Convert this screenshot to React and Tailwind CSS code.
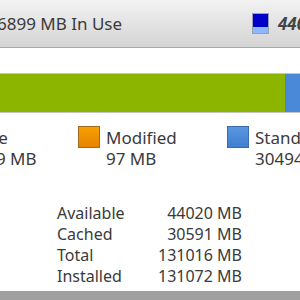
import { useState } from "react";

const legend = [
  { name: "In Use", value: "16899 MB", box: "bg-gradient-to-b from-[#9ccc10] to-[#7fae00] border-[#6e8f10]" },
  { name: "Modified", value: "97 MB", box: "bg-gradient-to-b from-[#f7a000] to-[#e68400] border-[#a06a20]" },
  { name: "Standby", value: "30494 MB", box: "bg-gradient-to-b from-[#5a96e0] to-[#3f7fd0] border-[#3a6aa8]" },
];

const stats = [
  ["Available", "44020 MB"],
  ["Cached", "30591 MB"],
  ["Total", "131016 MB"],
  ["Installed", "131072 MB"],
];

function LegendItem({ item }) {
  return (
    <div className="flex w-[149px] shrink-0 gap-[6px]">
      <div className={"h-[22px] w-[22px] shrink-0 border " + item.box}></div>
      <div className="mt-[1px] leading-[21px]">
        <div>{item.name}</div>
        <div>{item.value}</div>
      </div>
    </div>
  );
}

export default function App() {
  const [rows] = useState(stats);

  return (
    <div className="h-[300px] w-[300px] overflow-hidden bg-white text-[16px] text-[#3a3a3a] font-['Noto_Sans',sans-serif]">
      <div className="flex h-[48px] items-center border-b border-[#a8a8a8] bg-gradient-to-b from-[#f2f2f2] to-[#d4d4d4]">
        <div className="ml-[-3px] w-[255px] shrink-0 text-[17px]">6899 MB In Use</div>
        <div className="flex h-[21px] w-[17px] shrink-0 flex-col border border-[#9aa0b0]">
          <div className="flex-[2] bg-[#0000c8]"></div>
          <div className="flex-1 bg-[#8cb8ff]"></div>
        </div>
        <div className="ml-[9px] whitespace-nowrap text-[17px] font-bold italic text-[#444]">44020 MB Available</div>
      </div>

      <div className="mt-[25px] flex h-[40px] border-y border-[#c4c4c4]">
        <div className="w-[285px] shrink-0 bg-[#8cb500]"></div>
        <div className="w-[1px] shrink-0 bg-[#6e8a40]"></div>
        <div className="flex-1 bg-[#4a88d8]"></div>
      </div>

      <div className="ml-[-71px] mt-[13px] flex text-[17px]">
        {legend.map((item) => (
          <LegendItem key={item.name} item={item} />
        ))}
      </div>

      <div className="ml-[57px] mt-[34px] grid w-[185px] grid-cols-[auto_1fr] leading-[21px]">
        {rows.map(([label, value]) => (
          <div key={label} className="contents">
            <div>{label}</div>
            <div className="text-right">{value}</div>
          </div>
        ))}
      </div>

      <div className="mt-[4px] h-[10px] bg-[#a0a0a0]"></div>
    </div>
  );
}
